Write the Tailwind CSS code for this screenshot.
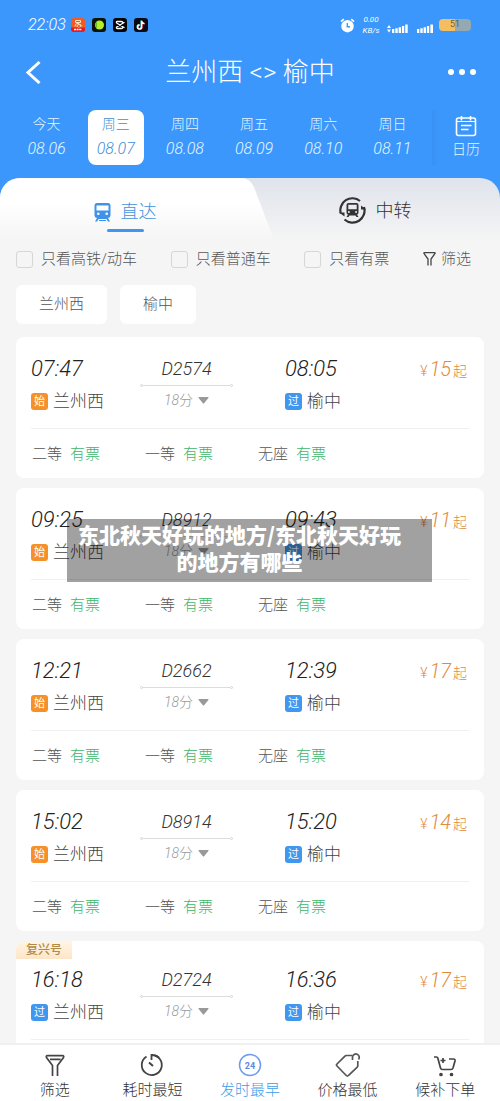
<!DOCTYPE html>
<html lang="zh-CN">
<head>
<meta charset="utf-8">
<meta name="viewport" content="width=device-width, initial-scale=1">
<title>兰州西 - 榆中</title>
<script src="https://cdn.jsdelivr.net/npm/@tailwindcss/browser@4"></script>
</head>
<body class="relative flex h-screen flex-col overflow-hidden bg-[#f5f5f5] font-['Roboto','Noto_Sans_CJK_SC',sans-serif] font-light text-[#444]">

<header class="shrink-0 bg-[#3c97fc] text-white">
  <div class="flex h-[50px] items-center pr-[29px] pl-[28px]">
    <span class="text-base italic">22:03</span>
    <div class="ml-[5px] flex gap-[7px]">
      <svg class="size-[14px]" viewBox="0 0 14 14"><rect width="14" height="14" rx="3" fill="#f15a24"/><path d="M4.500 2.500h5v2h-5zM4 8.500c0-4 5.500-4 5.500-.500 0 2-3.500 2-3.500 0s4-2 5 .500" fill="none" stroke="#ffe3b8"/><path d="M0 9.500h14V11a3 3 0 0 1-3 3H3a3 3 0 0 1-3-3z" fill="#e01e1e"/><path d="M3 11.500h8" stroke="#fff" stroke-width="1.500" stroke-dasharray="2 .6"/></svg>
      <svg class="size-[14px]" viewBox="0 0 14 14"><rect width="14" height="14" rx="3" fill="#0c1208"/><circle cx="7.500" cy="7" r="4.500" fill="#b4ee2a"/><path d="M5 3.500a4.500 4.500 0 0 0 0 7z" fill="#69b91b"/></svg>
      <svg class="size-[14px]" viewBox="0 0 14 14"><rect width="14" height="14" rx="3" fill="#050505"/><path d="M11.500 4.200 4 8.800c-1 .6-.8 1.700.3 1.700h4c1 0 1.500-.4 1.500-1.200M11.500 9.800 4 5.200c-1-.6-.8-1.700.3-1.700h4c1 0 1.500.4 1.500 1.200" fill="none" stroke="#fff" stroke-width="1.300"/></svg>
      <svg class="size-[14px]" viewBox="0 0 14 14"><rect width="14" height="14" rx="3" fill="#0a0a14"/><g fill="none" stroke-width="1.400"><path d="M7.200 2.500v6.300a2 2 0 1 1-2-2M7.200 3c.2 1.500 1.200 2.300 2.800 2.400" stroke="#25f4ee"/><path d="M8 3v6.300a2 2 0 1 1-2-2M8 3.400c.2 1.500 1.200 2.300 2.800 2.400" stroke="#fe2c55"/><path d="M7.600 2.700V9a2 2 0 1 1-2-2M7.600 3.200c.2 1.500 1.200 2.300 2.800 2.400" stroke="#fff"/></g></svg>
    </div>
    <svg class="ml-auto size-[15px]" viewBox="0 0 15 15" fill="none"><circle cx="7.500" cy="8.200" r="6.200" fill="#fff"/><path d="M1 3.700 3.800 1.200M14 3.700 11.200 1.200" stroke="#fff" stroke-width="1.600"/><path d="M7.300 5v3.700H10" stroke="#3c97fc" stroke-width="1.400"/></svg>
    <div class="ml-[6px] w-[20px] text-center text-[8px] leading-[11px] font-normal italic"><div>0.00</div><div>KB/s</div></div>
    <svg class="mt-[6px] ml-[6px] h-[9px] w-[21px]" viewBox="0 0 21 9" fill="#fff"><path d="M0 4l2-3 2 3zM0 5.500h4l-2 3zM5 5h2.300v4H5zM8.300 4.200h2.400V9H8.300zM11.600 3.200H14V9h-2.400zM14.900 2h2.300v7h-2.300zM18.200.5h2.500V9h-2.500z"/></svg>
    <svg class="mt-[6px] ml-[9px] h-[9px] w-[17px]" viewBox="0 0 17 9" fill="#fff"><path d="M0 5h2.300v4H0zM3.300 4.200h2.400V9H3.300zM6.600 3.200H9V9H6.600zM9.900 2h2.300v7H9.900zM13.400.5h2.600V9h-2.600z"/></svg>
    <div class="ml-[5px] flex h-[12px] w-[32px] items-center justify-center rounded bg-linear-to-r from-[#f3bd60] from-50% to-[#94a9b2] to-50% text-[9px] text-[#333]">51</div>
  </div>

  <div class="flex h-[44px] items-center justify-between px-[24px]">
    <button class="w-8" aria-label="返回"><svg class="h-[24px] w-[18px]" viewBox="0 0 18 24" fill="none" stroke="#fff" stroke-width="3"><path d="M15.500 2 4 12.500 15.500 23"/></svg></button>
    <h1 class="text-[26px] leading-8 font-light">兰州西 &lt;&gt; 榆中</h1>
    <button class="flex w-8 justify-end gap-[5px]" aria-label="更多"><span class="size-[6px] rounded-full bg-white"></span><span class="size-[6px] rounded-full bg-white"></span><span class="size-[6px] rounded-full bg-white"></span></button>
  </div>

  <nav class="flex pt-4 pb-[13px] pl-3" aria-label="日期">
    <div class="grid flex-1 grid-cols-6 text-center text-[#e4f6ff]" id="dates"></div>
    <button class="ml-[5px] flex w-[68px] flex-col items-center bg-linear-to-r from-[#3891f5] to-[#3c97fc] to-10% pt-[5px]">
      <svg class="size-[22px]" viewBox="0 0 22 22" fill="none" stroke="#fff" stroke-width="1.600"><rect x="1.500" y="3" width="19" height="17.500" rx="2"/><path d="M1.500 6.500h19" stroke-width="1"/><path d="M6.500 1v4.500M15.500 1v4.500M6 10.500h10.500M6 14.500h7.500"/></svg>
      <span class="mt-[2px] text-sm leading-5 text-[#e4f6ff]">日历</span>
    </button>
  </nav>
</header>

<div class="shrink-0 bg-[#3c97fc]" role="tablist">
  <div class="relative flex h-[62px] overflow-hidden rounded-t-[20px] bg-linear-to-b from-[#dfe3eb] to-[#f5f5f5]">
    <svg class="absolute inset-y-0 left-0 h-full w-[55%]" viewBox="0 0 275 62" preserveAspectRatio="none"><defs><linearGradient id="tab" x2="0" y2="1"><stop offset=".4" stop-color="#fff"/><stop offset="1" stop-color="#f5f5f5"/></linearGradient></defs><path d="M0 0h240q10 0 14 9l20 53H0z" fill="url(#tab)"/></svg>
    <button role="tab" aria-selected="true" class="relative flex w-1/2 flex-col items-center pt-[20px] text-[#3f93dd]">
      <span class="flex items-center gap-[10px] text-lg leading-[28px]"><svg class="h-[19px] w-[17px]" viewBox="0 0 17 19"><path d="M3 0h11q2.500 0 2.500 3v9.500q0 2-2.500 2.500l2 3.500h-2.200L12.500 16h-8l-1.300 2.500H1L3 15Q.5 14.500.5 12.500V3Q.5 0 3 0" fill="#3d93ec"/><path d="M2.500 2.500h12v5h-12z" fill="#fff"/><circle cx="4.300" cy="10.800" r="1.300" fill="#fff"/><circle cx="12.700" cy="10.800" r="1.300" fill="#fff"/><path d="M5 17.500h7" stroke="#3d93ec"/></svg>直达</span>
      <span class="mt-[3px] h-[3px] w-[37px] rounded-full bg-[#4095f0]"></span>
    </button>
    <button role="tab" aria-selected="false" class="relative flex w-1/2 items-start justify-center gap-[10px] pt-[19px] text-lg leading-[28px] text-[#333]">
      <svg class="size-[27px]" viewBox="0 0 27 27" fill="none"><path d="M1.800 16.500A12 12 0 0 1 21 4M25 10a12 12 0 0 1-19.500 12.500" stroke="#333" stroke-width="2.200"/><path d="M0 15.500h5.500v4zM27 12.500h-5v-4z" fill="#333"/><path d="M9.500 6h8q2 0 2 2v7.500q0 2-1.500 2l1.500 2.500h-2L16.500 18.500h-6L9.500 20h-2L9 17.500q-1.500 0-1.500-2V8q0-2 2-2" fill="#333"/><path d="M9.300 7.800h8.400v4.500H9.300z" fill="#e9ebf0"/><path d="M9 15h1.800M16.200 15H18" stroke="#fff" stroke-width="1.500"/></svg>中转
    </button>
  </div>
</div>

<main class="min-h-0 flex-1 overflow-y-auto px-4 [scrollbar-width:none]">
  <div class="flex items-center justify-between pt-2 pr-[13px] text-[15px] leading-[22px] text-[#555]">
    <label class="flex items-center gap-2"><input type="checkbox" class="size-[17px] appearance-none rounded-[3px] border border-[#d6d6d6]">只看高铁/动车</label>
    <label class="flex items-center gap-2"><input type="checkbox" class="size-[17px] appearance-none rounded-[3px] border border-[#d6d6d6]">只看普通车</label>
    <label class="flex items-center gap-2"><input type="checkbox" class="size-[17px] appearance-none rounded-[3px] border border-[#d6d6d6]">只看有票</label>
    <button class="flex items-center gap-[5px]"><svg class="h-[14px] w-[13px]" viewBox="0 0 13 14" fill="none" stroke="#444" stroke-width="1.300"><path d="M5 13.500V7L1 1.500q-.5-.8.500-.8h10q1 0 .5.800L8 7v6.500"/></svg>筛选</button>
  </div>
  <div class="mt-[15px] mb-[13px] flex gap-[13px] text-[15px] text-[#555]">
    <button class="h-[39px] rounded-md bg-white px-[23px]">兰州西</button>
    <button class="h-[39px] rounded-md bg-white px-[23px]">榆中</button>
  </div>
  <div class="flex flex-col gap-[10px]" id="trains"></div>
</main>

<nav class="grid shrink-0 grid-cols-5 border-t-2 border-[#f0f0f0] bg-white px-[6px] pt-[7px] text-[15px] leading-[22px] text-[#333]" aria-label="排序">
  <button class="flex flex-col items-center gap-px"><svg class="size-[26px]" viewBox="0 0 26 26" fill="none" stroke="#444" stroke-width="1.700"><path d="M10.500 24V13.500L4.500 5.500q-.8-1.800 1-1.800h15q1.800 0 1 1.800L15.500 13.500V24M8 7.300h10.500"/></svg>筛选</button>
  <button class="flex flex-col items-center gap-px"><svg class="size-[26px]" viewBox="0 0 26 26" fill="none" stroke="#444" stroke-width="1.800"><path d="M7.500 4.500A10 10 0 1 0 12.500 3v5M16.500 3.500l2 1"/><path d="M16 3.500a10 10 0 0 1 4 2.300M10 10.500l4 3.500" stroke-width="2"/></svg>耗时最短</button>
  <button class="flex flex-col items-center gap-px text-[#3f9be8]"><svg class="size-[26px]" viewBox="0 0 26 26"><circle cx="13" cy="13" r="10.500" fill="none" stroke="#6d9af2" stroke-width="1.500"/><text x="13" y="16.500" text-anchor="middle" font-size="9" font-weight="700" fill="#5b87e8">24</text></svg>发时最早</button>
  <button class="flex flex-col items-center gap-px"><svg class="size-[26px]" viewBox="0 0 26 26" fill="none" stroke="#555" stroke-width="1.700"><path d="M17 3.500H11.500q-1 0-1.800.8L2 12q-1 1 0 2l9.300 9.500q1 1 2 0L22 15.500q.8-.8.800-1.800V9"/><path d="M17.500 8V5a3.400 3.400 0 1 1 6 2.500"/></svg>价格最低</button>
  <button class="flex flex-col items-center gap-px"><svg class="size-[26px]" viewBox="0 0 26 26" fill="none" stroke="#444" stroke-width="1.700"><path d="M2 5h2.500q1 0 1.300 1l2.700 10q.4 1.500 2 1.500h8.500q1.500 0 2-1.500l2-7q.4-2-1.500-2H17M8.500 8.500h5M11 6v5"/><circle cx="9" cy="22.500" r="1" fill="#444"/><circle cx="19.500" cy="22.500" r="1" fill="#444"/></svg>候补下单</button>
</nav>

<div class="absolute inset-x-[67px] top-[519px] mr-px h-[63px] bg-black/37 pt-[2px] pr-5 text-center font-['Noto_Sans_CJK_SC',sans-serif] text-[21px] leading-[27px] font-black text-white">东北秋天好玩的地方/东北秋天好玩<br>的地方有哪些</div>

<script>
const dates = [['今天','08.06'],['周三','08.07'],['周四','08.08'],['周五','08.09'],['周六','08.10'],['周日','08.11']];
document.getElementById('dates').innerHTML = dates.map(([day, date], i) => `
  <button class="mx-auto flex h-[55px] w-14 flex-col items-center rounded-lg pt-[2px] ${i === 1 ? 'bg-white text-[#3f8fd6]' : ''}">
    <span class="text-sm leading-6">${day}</span>
    <span class="text-base leading-[26px] italic">${date}</span>
  </button>`).join('');

const station = (kind, name) => `
  <div class="mt-[6px] flex items-center gap-[5px] text-[17px] leading-6 text-[#444]">
    <span class="flex size-[17px] items-center justify-center rounded-[3px] text-[11px] leading-none font-normal text-white ${kind === '始' ? 'bg-[#f59128]' : 'bg-[#4097f0]'}">${kind}</span>${name}
  </div>`;
const seat = name => `<div class="flex gap-2">${name}<span class="text-[#3fb56b]">有票</span></div>`;
const trains = [
  ['07:47','D2574','08:05','15','始'],
  ['09:25','D8912','09:43','11','始'],
  ['12:21','D2662','12:39','17','始'],
  ['15:02','D8914','15:20','14','始'],
  ['16:18','D2724','16:36','17','过','复兴号'],
];
document.getElementById('trains').innerHTML = trains.map(([dep, no, arr, price, kind, tag]) => `
  <article class="overflow-hidden rounded-lg bg-white">
    ${tag ? `<div class="-mb-[11px] h-[18px] w-14 bg-linear-to-b from-[#fff4e4] to-[#fde6c8] text-center text-xs leading-[18px] font-medium text-[#b08a4a]">${tag}</div>` : ''}
    <div class="px-[15px]">
      <div class="grid grid-cols-[109fr_145fr_184fr] pt-[18px] pb-[15px]">
        <div><div class="text-[22px] leading-7 text-[#222] italic">${dep}</div>${station(kind, '兰州西')}</div>
        <div>
          <div class="w-[93px] text-center">
            <div class="text-lg leading-7 text-[#333] italic">${no}</div>
            <div class="mt-px flex items-center"><span class="size-[3px] rounded-full border border-[#d4d4d4]"></span><span class="h-px flex-1 bg-[#dcdcdc]"></span><span class="size-[3px] rounded-full border border-[#d4d4d4]"></span></div>
            <button class="mt-px inline-flex items-center gap-[5px] text-sm leading-6 text-[#999]"><span><i>18</i>分</span><svg class="h-[7px] w-[11px]" viewBox="0 0 11 7"><path d="M1 0h9q1 0 .4 1L6.300 6q-.8 1-1.600 0L.6 1Q0 0 1 0" fill="#999"/></svg></button>
          </div>
        </div>
        <div>
          <div class="flex items-baseline justify-between leading-7"><span class="text-[22px] text-[#222] italic">${arr}</span><span class="pr-[2px] text-sm leading-none text-[#e08a3c]">¥<i class="mx-[2px] text-[20px]">${price}</i>起</span></div>
          ${station('过', '榆中')}
        </div>
      </div>
      <div class="grid grid-cols-[113fr_113fr_210fr] border-t border-[#f0f0f0] px-px pt-[14px] pb-[13px] text-[15px] leading-[22px] text-[#555]">${seat('二等')}${seat('一等')}${seat('无座')}</div>
    </div>
  </article>`).join('');
</script>
</body>
</html>
